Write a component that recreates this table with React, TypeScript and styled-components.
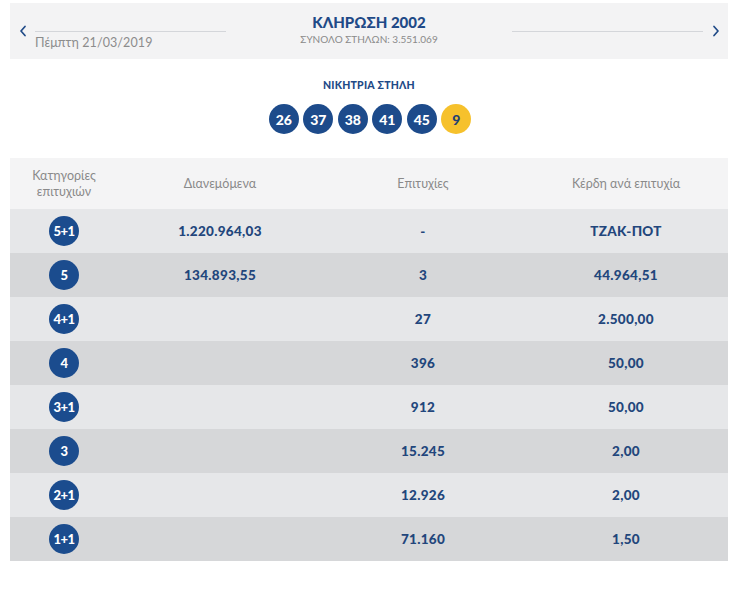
import React from "react";
import styled, { createGlobalStyle } from "styled-components";

const Global = createGlobalStyle`
  html, body { margin: 0; padding: 0; background: #fff; }
  body { font-family: "Lato", "Noto Sans", sans-serif; }
`;

const Page = styled.div`
  width: 718px;
  padding: 3px 0 0 10px;
`;

const HeaderBox = styled.div`
  height: 56px;
  background: #f3f3f4;
  display: flex;
  align-items: stretch;
`;

const Chevron = styled.div`
  width: 25px;
  display: flex;
  justify-content: center;
  padding-top: 22px;
  box-sizing: border-box;
`;

const SideBlock = styled.div`
  width: 191px;
  padding-top: 28px;
  box-sizing: border-box;
`;

const Rule = styled.div`
  height: 1px;
  background: #d4d6da;
`;

const DateText = styled.div`
  margin-top: 3px;
  font-size: 12.5px;
  color: #8c8c8c;
  letter-spacing: 0.1px;
`;

const Center = styled.div`
  flex: 1;
  display: flex;
  flex-direction: column;
  align-items: center;
  padding-top: 9px;
`;

const Title = styled.div`
  font-size: 15px;
  font-weight: 900;
  color: #1f4a87;
  line-height: 20px;
`;

const Sub = styled.div`
  font-size: 10px;
  color: #8a8a8a;
  line-height: 14px;
`;

const Winning = styled.div`
  display: flex;
  flex-direction: column;
  align-items: center;
  margin-top: 19px;
`;

const WinLabel = styled.div`
  font-size: 10.5px;
  font-weight: 900;
  color: #1f4a87;
  line-height: 14px;
  letter-spacing: 0.2px;
`;

const Balls = styled.div`
  display: flex;
  gap: 4.5px;
  margin-top: 12px;
  margin-left: 2px;
`;

const Ball = styled.div<{ $bonus?: boolean }>`
  width: 30px;
  height: 30px;
  border-radius: 50%;
  background: ${(p) => (p.$bonus ? "#f6c12c" : "#1d4b8b")};
  color: ${(p) => (p.$bonus ? "#1f3f73" : "#fff")};
  font-size: 14px;
  font-weight: 900;
  display: flex;
  align-items: center;
  justify-content: center;
`;

const Table = styled.div`
  margin-top: 24px;
  display: grid;
  grid-template-columns: 108px 204px 202px 204px;
`;

const HeadCell = styled.div`
  height: 51px;
  background: #f4f4f5;
  display: flex;
  align-items: center;
  justify-content: center;
  text-align: center;
  font-size: 12.5px;
  color: #8a8a8a;
  line-height: 16px;
`;

const Cell = styled.div<{ $dark: boolean }>`
  height: 44px;
  background: ${(p) => (p.$dark ? "#d6d7d9" : "#e6e7e9")};
  display: flex;
  align-items: center;
  justify-content: center;
  font-size: 13.5px;
  font-weight: 900;
  color: #22467c;
  letter-spacing: 0.3px;
`;

const Badge = styled.div`
  width: 30px;
  height: 30px;
  border-radius: 50%;
  background: #1b4c8e;
  color: #fff;
  font-size: 13px;
  font-weight: 900;
  display: flex;
  align-items: center;
  justify-content: center;
  letter-spacing: -0.5px;
`;

const ChevronIcon = ({ dir }: { dir: "left" | "right" }) => (
  <svg width="8" height="12" viewBox="0 0 8 12">
    <path
      d={dir === "left" ? "M6 1.5 L2 6 L6 10.5" : "M2 1.5 L6 6 L2 10.5"}
      fill="none"
      stroke="#1f4a87"
      strokeWidth="1.7"
      strokeLinecap="round"
      strokeLinejoin="round"
    />
  </svg>
);

const rows = [
  { cat: "5+1", dist: "1.220.964,03", wins: "-", prize: "ΤΖΑΚ-ΠΟΤ" },
  { cat: "5", dist: "134.893,55", wins: "3", prize: "44.964,51" },
  { cat: "4+1", dist: "", wins: "27", prize: "2.500,00" },
  { cat: "4", dist: "", wins: "396", prize: "50,00" },
  { cat: "3+1", dist: "", wins: "912", prize: "50,00" },
  { cat: "3", dist: "", wins: "15.245", prize: "2,00" },
  { cat: "2+1", dist: "", wins: "12.926", prize: "2,00" },
  { cat: "1+1", dist: "", wins: "71.160", prize: "1,50" },
];

export default function App() {
  return (
    <>
      <Global />
      <Page>
        <HeaderBox>
          <Chevron>
            <ChevronIcon dir="left" />
          </Chevron>
          <SideBlock>
            <Rule />
            <DateText>Πέμπτη 21/03/2019</DateText>
          </SideBlock>
          <Center>
            <Title>ΚΛΗΡΩΣΗ 2002</Title>
            <Sub>ΣΥΝΟΛΟ ΣΤΗΛΩΝ: 3.551.069</Sub>
          </Center>
          <SideBlock>
            <Rule />
          </SideBlock>
          <Chevron>
            <ChevronIcon dir="right" />
          </Chevron>
        </HeaderBox>
        <Winning>
          <WinLabel>ΝΙΚΗΤΡΙΑ ΣΤΗΛΗ</WinLabel>
          <Balls>
            {["26", "37", "38", "41", "45"].map((n) => (
              <Ball key={n}>{n}</Ball>
            ))}
            <Ball $bonus>9</Ball>
          </Balls>
        </Winning>
        <Table>
          <HeadCell>
            Κατηγορίες
            <br />
            επιτυχιών
          </HeadCell>
          <HeadCell>Διανεμόμενα</HeadCell>
          <HeadCell>Επιτυχίες</HeadCell>
          <HeadCell>Κέρδη ανά επιτυχία</HeadCell>
          {rows.map((r, i) => {
            const dark = i % 2 === 1;
            return (
              <React.Fragment key={r.cat}>
                <Cell $dark={dark}>
                  <Badge>{r.cat}</Badge>
                </Cell>
                <Cell $dark={dark}>{r.dist}</Cell>
                <Cell $dark={dark}>{r.wins}</Cell>
                <Cell $dark={dark}>{r.prize}</Cell>
              </React.Fragment>
            );
          })}
        </Table>
      </Page>
    </>
  );
}
